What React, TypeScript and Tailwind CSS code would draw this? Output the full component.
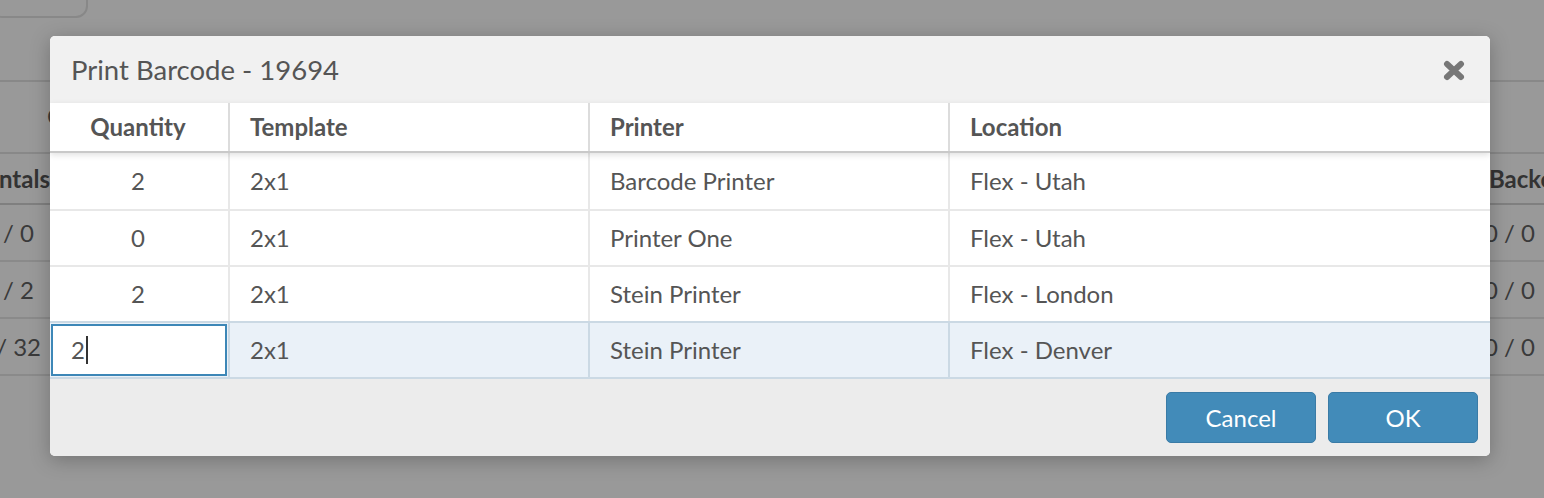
import React from "react";

const rows = [
  { q: "2", t: "2x1", p: "Barcode Printer", l: "Flex - Utah" },
  { q: "0", t: "2x1", p: "Printer One", l: "Flex - Utah" },
  { q: "2", t: "2x1", p: "Stein Printer", l: "Flex - London" },
];

const bgRows = [
  { left: "0 / 0", leftEnd: "w-[34px]", right: "0 / 0" },
  { left: "0 / 2", leftEnd: "w-[34px]", right: "0 / 0" },
  { left: "/ 32", leftEnd: "w-[41px]", right: "0 / 0" },
];

export default function App() {
  return (
    <div
      className="relative w-[1544px] h-[498px] overflow-hidden bg-[#999999]"
      style={{ fontFamily: "Lato, 'Open Sans', sans-serif" }}
    >
      {/* Background page (dimmed) */}
      <div className="flex flex-col text-[#333333]">
        <div className="h-[18px] flex">
          <div className="w-[98px] h-[60px] -mt-[42px] -ml-[10px] rounded-[12px] border-2 border-[#888888]" />
        </div>
        <div className="h-[62px]" />
        <div className="h-[2px] bg-[#888888]" />
        <div className="h-[70px] flex items-end pl-[47px] pb-[18px] text-[24px] text-[#3a3a3a]">C</div>
        <div className="h-[2px] bg-[#888888]" />
        <div className="h-[49px] flex justify-between items-center text-[24px] font-bold text-[#333333]">
          <div className="w-[50px] overflow-hidden flex justify-end whitespace-nowrap">ntals</div>
          <div className="w-[55px] overflow-hidden whitespace-nowrap">Backo</div>
        </div>
        <div className="h-[2px] bg-[#7f7f7f]" />
        {bgRows.map((r, i) => (
          <React.Fragment key={i}>
            <div className="h-[55px] flex justify-between items-center text-[24px] text-[#3a3a3a]">
              <div className={`${r.leftEnd} overflow-hidden flex justify-end whitespace-nowrap`}>{r.left}</div>
              <div className="w-[60px] whitespace-nowrap">{r.right}</div>
            </div>
            <div className="h-[2px] bg-[#8a8a8a]" />
          </React.Fragment>
        ))}
      </div>

      {/* Modal */}
      <div className="absolute left-[50px] top-[36px] w-[1440px] h-[420px] bg-white rounded-[5px] overflow-hidden shadow-[0_4px_20px_rgba(0,0,0,0.25)] flex flex-col">
        <div className="h-[67px] shrink-0 bg-[#f1f1f1] flex items-center justify-between pl-[21px] pr-[25px]">
          <span className="text-[27.5px] text-[#555555]">Print Barcode - 19694</span>
          <svg width="22" height="21" viewBox="0 0 22 21" className="mt-[1px]">
            <path d="M4 4 L18 17 M18 4 L4 17" stroke="#777777" strokeWidth="6" strokeLinecap="round" />
          </svg>
        </div>

        {/* Table header */}
        <div className="relative z-10 h-[50px] shrink-0 flex border-b-2 border-[#c9c9c9] shadow-[0_2px_6px_rgba(0,0,0,0.12)] bg-white text-[24px] font-bold text-[#555555]">
          <div className="w-[180px] border-r-2 border-[#dcdcdc] flex items-center justify-center pr-[2px]">Quantity</div>
          <div className="w-[360px] border-r-2 border-[#dcdcdc] flex items-center pl-[20px]">Template</div>
          <div className="w-[360px] border-r-2 border-[#dcdcdc] flex items-center pl-[20px]">Printer</div>
          <div className="flex-1 flex items-center pl-[20px]">Location</div>
        </div>

        {/* Rows */}
        <div className="flex flex-col text-[24px] text-[#555555]">
          {rows.map((r, i) => (
            <div key={i} className={`${i === 0 ? "h-[58px]" : "h-[56px]"} flex border-b-2 ${i === 2 ? "border-[#cbd9e4]" : "border-[#e8e8e8]"}`}>
              <div className="w-[180px] border-r-2 border-[#e8e8e8] flex items-center justify-center pr-[2px]">{r.q}</div>
              <div className="w-[360px] border-r-2 border-[#e8e8e8] flex items-center pl-[20px]">{r.t}</div>
              <div className="w-[360px] border-r-2 border-[#e8e8e8] flex items-center pl-[20px]">{r.p}</div>
              <div className="flex-1 flex items-center pl-[20px]">{r.l}</div>
            </div>
          ))}
          <div className="h-[56px] flex bg-[#eaf1f8] border-b-2 border-[#cbd9e4]">
            <div className="w-[180px] border-r-2 border-[#cbd9e4] p-[1px]">
              <div className="h-full bg-white border-2 border-[#3d87b7] flex items-center pl-[18px]">
                <span>2</span>
                <span className="inline-block w-[2px] h-[28px] bg-[#333333] ml-[1px]" />
              </div>
            </div>
            <div className="w-[360px] border-r-2 border-[#cbd9e4] flex items-center pl-[20px]">2x1</div>
            <div className="w-[360px] border-r-2 border-[#cbd9e4] flex items-center pl-[20px]">Stein Printer</div>
            <div className="flex-1 flex items-center pl-[20px]">Flex - Denver</div>
          </div>
        </div>

        {/* Footer */}
        <div className="flex-1 bg-[#ececec] flex justify-end items-start pt-[13px] pr-[12px] gap-[12px]">
          <button className="w-[150px] h-[51px] rounded-[5px] bg-[#428bb9] border border-[#3a7ba6] text-white text-[24px]">Cancel</button>
          <button className="w-[150px] h-[51px] rounded-[5px] bg-[#428bb9] border border-[#3a7ba6] text-white text-[24px]">OK</button>
        </div>
      </div>
    </div>
  );
}
